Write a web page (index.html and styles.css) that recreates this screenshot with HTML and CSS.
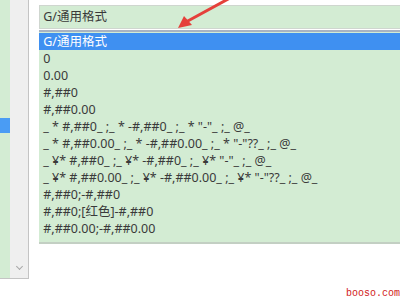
FILE: index.html
```html
<!DOCTYPE html>
<html lang="zh-CN">
<head>
    <meta charset="UTF-8">
    <title>设置单元格格式</title>
    <link rel="stylesheet" href="styles.css">
</head>
<body>
    <div class="dialog">
        <div class="category">
            <div class="category-list">
                <div class="category-item selected"></div>
            </div>
            <div class="scrollbar">
                <span class="scroll-down"></span>
            </div>
        </div>
        <div class="format-area">
            <div class="format-input">G/通用格式</div>
            <ul class="format-list">
                <li class="selected">G/通用格式</li>
                <li>0</li>
                <li>0.00</li>
                <li>#,##0</li>
                <li>#,##0.00</li>
                <li>_ * #,##0_ ;_ * -#,##0_ ;_ * "-"_ ;_ @_</li>
                <li>_ * #,##0.00_ ;_ * -#,##0.00_ ;_ * "-"??_ ;_ @_</li>
                <li>_ ¥* #,##0_ ;_ ¥* -#,##0_ ;_ ¥* "-"_ ;_ @_</li>
                <li>_ ¥* #,##0.00_ ;_ ¥* -#,##0.00_ ;_ ¥* "-"??_ ;_ @_</li>
                <li>#,##0;-#,##0</li>
                <li>#,##0;[红色]-#,##0</li>
                <li>#,##0.00;-#,##0.00</li>
            </ul>
        </div>
    </div>

    <svg class="arrow" width="70" height="34" viewBox="0 0 70 34">
        <path d="M58 -2 L14 22" stroke="#e5403b" stroke-width="3" stroke-linecap="round" fill="none"/>
        <path d="M6 28 L12 16 L20 25 Z" fill="#e5403b"/>
    </svg>

    <div class="watermark">booso.com</div>
</body>
</html>
```

FILE: styles.css
```css
body {
    margin: 0;
    width: 400px;
    height: 300px;
    overflow: hidden;
    background: #ffffff;
    font-family: "Noto Sans", "Noto Sans CJK SC", sans-serif;
    font-size: 12.5px;
    color: #3a3a3a;
    position: relative;
}
.dialog {
    display: flex;
    align-items: flex-start;
}
.category {
    display: flex;
    width: 29px;
    height: 278px;
    border-right: 1px solid #c4c4c4;
    border-bottom: 1px solid #c4c4c4;
}
.category-list {
    width: 10px;
    background: #d3ecd3;
    padding-top: 118px;
}
.category-item.selected {
    height: 15px;
    background: #4a9cf4;
}
.scrollbar {
    flex: 1;
    background: #efefef;
    position: relative;
}
.scroll-down {
    position: absolute;
    left: 7px;
    bottom: 9px;
    width: 4px;
    height: 4px;
    border-right: 1px solid #a8a8a8;
    border-bottom: 1px solid #a8a8a8;
    transform: rotate(45deg);
}
.format-area {
    margin-left: 10px;
    width: 370px;
    padding-top: 5px;
}
.format-input {
    height: 22px;
    line-height: 22px;
    padding-left: 3px;
    background: #d3ecd3;
    border: 1px solid #cfd6cf;
    border-right: none;
}
.format-list {
    list-style: none;
    margin: 1px 0 0;
    padding: 1px 0 0;
    height: 209px;
    background: #d3ecd3;
    border-top: 2px solid #a9b3c2;
    border-bottom: 2px solid #c3cfc3;
}
.format-list li {
    height: 17px;
    line-height: 17px;
    padding-left: 4px;
    white-space: pre;
}
.format-list li.selected {
    background: #3f90f1;
    color: #ffffff;
}
.arrow {
    position: absolute;
    left: 172px;
    top: 0;
}
.watermark {
    position: absolute;
    right: 0;
    bottom: 1px;
    font-family: "Liberation Mono", monospace;
    font-size: 10px;
    color: #d11a1a;
}
```
